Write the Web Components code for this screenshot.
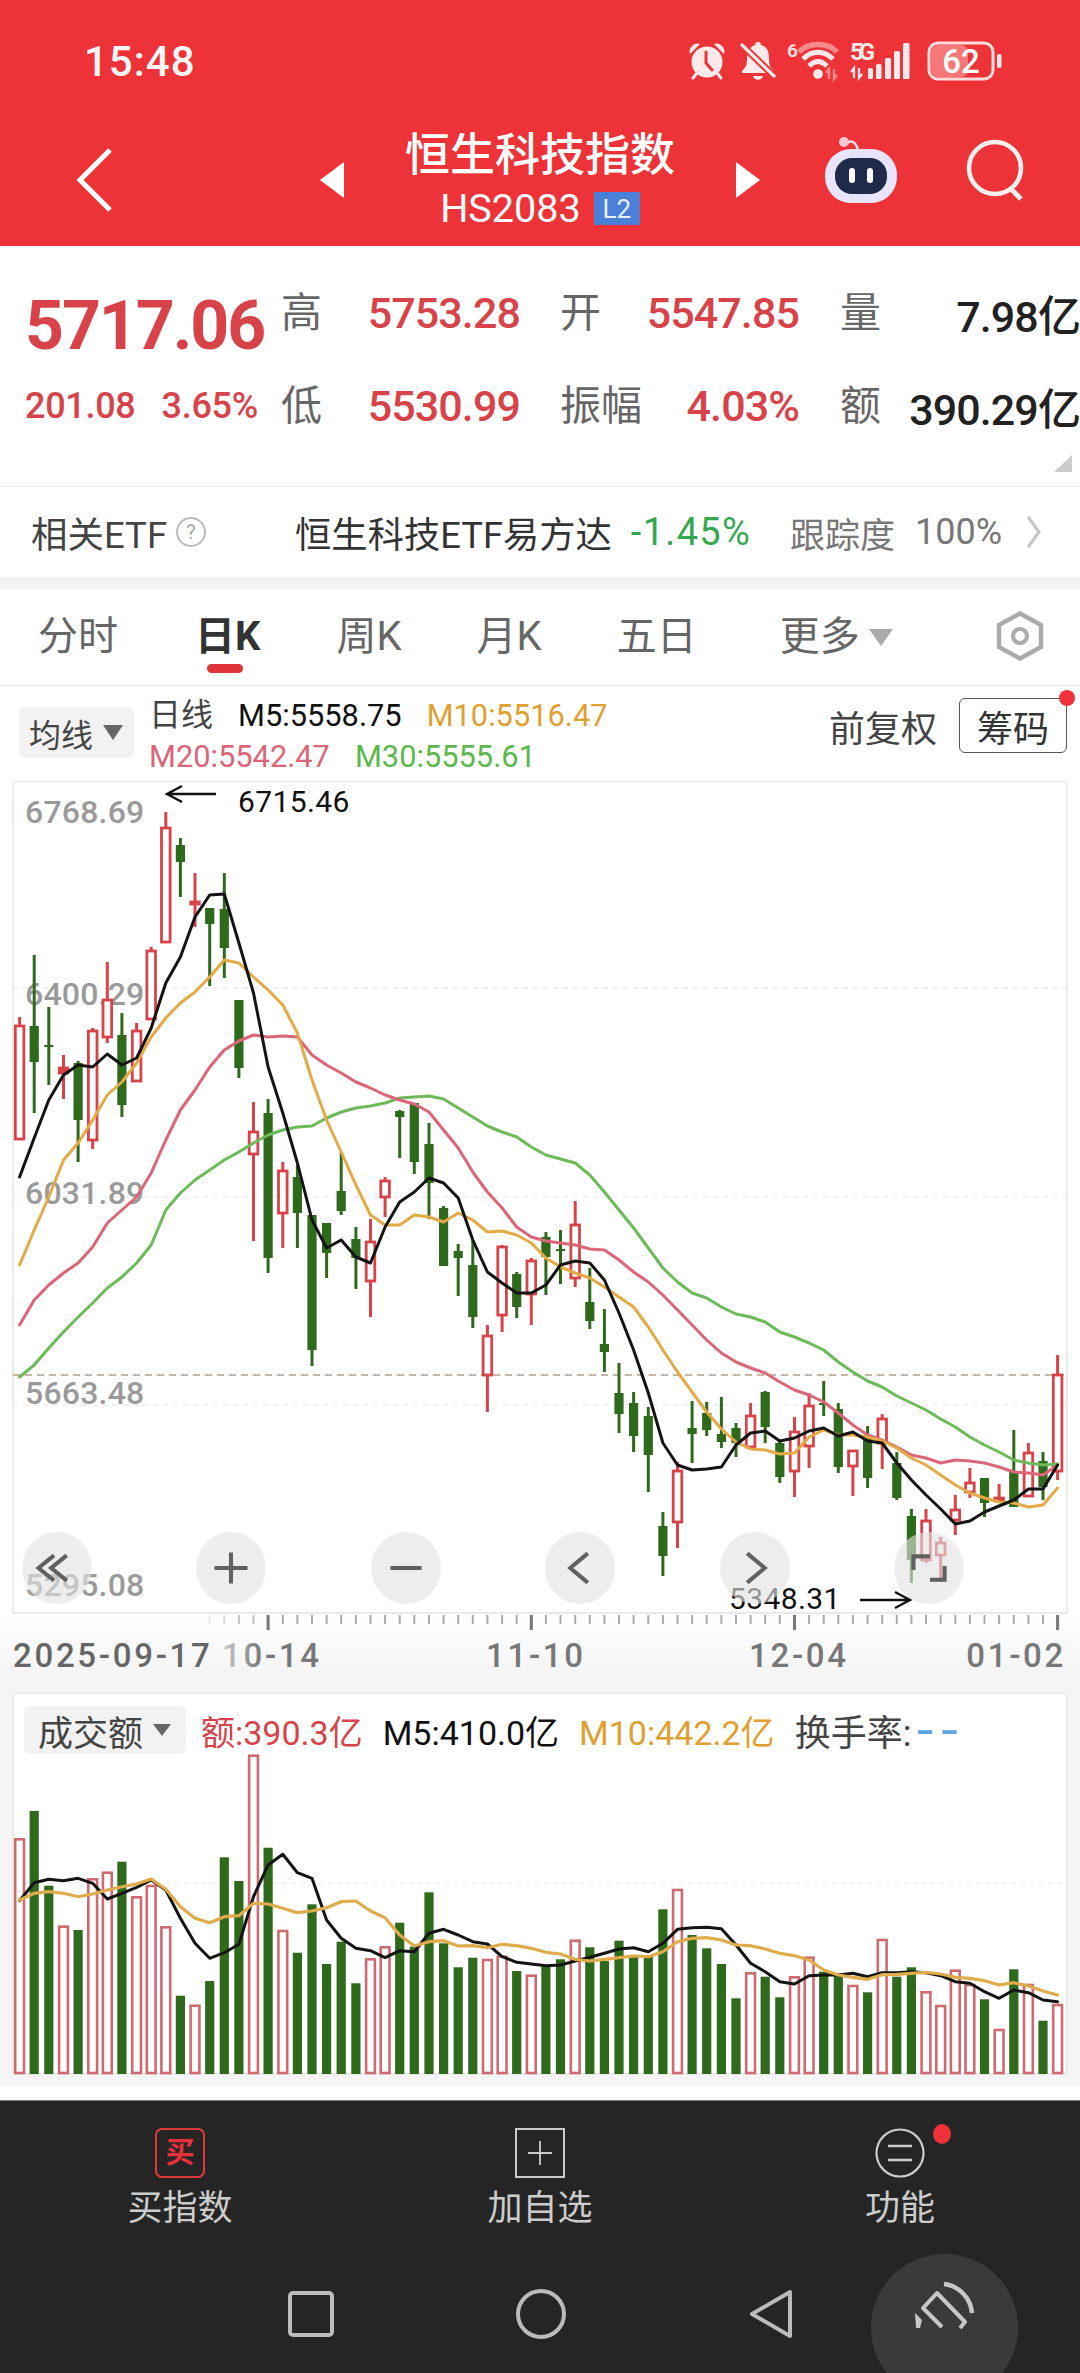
<!DOCTYPE html>
<html lang="zh-CN"><head><meta charset="utf-8"><title>恒生科技指数</title>
<style>
html,body{margin:0;padding:0;background:#fff}
body{width:1080px;height:2373px;overflow:hidden;font-family:Roboto,"Noto Sans CJK SC",sans-serif;color:#222}
</style></head><body>
<stock-header></stock-header>
<quote-panel></quote-panel>
<etf-row></etf-row>
<period-tabs></period-tabs>
<ma-legend></ma-legend>
<kline-chart></kline-chart>
<amount-chart></amount-chart>
<action-bar></action-bar>
<script>
const FONT='Roboto,"Noto Sans CJK SC",sans-serif';
const RED='#d8434a',GREEN='#2f6a1c',BLK='#141414',ORG='#e3aa45',PNK='#dc6678',LGR='#6dbb58';
const X=i=>19.6+14.62*i;
const poly=(a,c,w,f=y=>y)=>`<polyline fill="none" stroke="${c}" stroke-width="${w}" stroke-linejoin="round" stroke-linecap="round" points="${a.map((y,i)=>X(i).toFixed(1)+','+f(y).toFixed(1)).join(' ')}"/>`;
function def(name,css,html){
  customElements.define(name,class extends HTMLElement{
    constructor(){super();const s=this.attachShadow({mode:'open'});s.innerHTML=`<style>${css}</style>${typeof html==='function'?html(this):html}`;}
  });
}

/* ---------- header ---------- */
def('stock-header',`
:host{display:block;height:246px;background:#ee3338;color:#fff;font-family:${FONT}}
.status{display:flex;align-items:center;height:122px;box-sizing:border-box;padding:0 0 0 84px}
.time{font-size:42px;font-weight:500;letter-spacing:1px;width:603px;opacity:.96}
.icons{display:flex;align-items:center;gap:0}
.nav{display:flex;align-items:center;height:124px;position:relative;margin-top:-4px}
.back{margin-left:76px;width:38px;height:66px}
.ctr{position:absolute;left:320px;width:440px;top:0;display:flex;align-items:center;justify-content:space-between;height:100%}
.tt{display:flex;flex-direction:column;align-items:center;gap:3px;margin-top:-6px}
.name{font-size:45px;line-height:60px;font-weight:500;white-space:nowrap}
.code{display:flex;align-items:center;gap:13px;font-size:39.600px;line-height:40px;white-space:nowrap}
.l2{background:#4a80d8;width:46px;height:33px;display:flex;align-items:center;justify-content:center;font-size:26px;color:#e8f0ff}
.right{position:absolute;left:824px;top:18px;display:flex;gap:68px;align-items:center}
`,`
<div class="status"><span class="time">15:48</span><div class="icons">
<svg width="40" height="40" viewBox="0 0 40 40" style="margin-right:12px"><g fill="#ffe9e9"><path d="M3 13 A8 8 0 0 1 13 3 Z"/><path d="M37 13 A8 8 0 0 0 27 3 Z"/><circle cx="20" cy="21" r="15.5"/></g><path d="M6 37l4-5M34 37l-4-5" stroke="#ffe9e9" stroke-width="3" stroke-linecap="round"/><path d="M19 11v11l6 7" fill="none" stroke="#ee3338" stroke-width="3" stroke-linecap="round"/></svg>
<svg width="38" height="40" viewBox="0 0 38 40" style="margin-right:10px"><path d="M19 1c2 0 3 1 3 3 7 2 8 8 8 14 0 7 2 9 5 12v2H3v-2c3-3 5-5 5-12 0-6 2-12 8-14 0-2 1-3 3-3z" fill="#ffe9e9"/><path d="M14 35h10c-1 5-9 5-10 0z" fill="#ffe9e9"/><path d="M2 3l34 33" stroke="#ee3338" stroke-width="7"/><path d="M2 3l34 33" stroke="#ffe9e9" stroke-width="3.2"/></svg>
<svg width="54" height="64" viewBox="0 -12 54 64" style="margin-right:9px"><text x="0" y="16" font-size="19" font-weight="700" fill="#ffdede" font-family="Roboto">6</text><path d="M12 11C21 1 41 1 50 11" fill="none" stroke="#f98a8a" stroke-width="5.500"/><path d="M16 18C25 9 37 9 46 18M22 25C28 19 34 19 40 25" fill="none" stroke="#ffe9e9" stroke-width="4.800"/><circle cx="31" cy="33" r="4.800" fill="#ffe9e9"/><path d="M42 38V28l-3 4M47 28v10l3-4" fill="none" stroke="#f98a8a" stroke-width="2.400"/></svg>
<svg width="62" height="64" viewBox="0 -12 62 64" style="margin-right:15px"><text x="0" y="19" font-size="24" font-weight="700" fill="#ffe9e9" font-family="Roboto" textLength="25">5G</text><path d="M4 37V27l-3 4M9 27v10l3-4" fill="none" stroke="#ffe9e9" stroke-width="2.200"/><g fill="#ffe9e9"><rect x="18" y="27" width="5" height="11" rx="1.500"/><rect x="26" y="23" width="5.500" height="15" rx="1.500"/><rect x="35" y="17" width="6" height="21" rx="1.500"/><rect x="44" y="10" width="6" height="28" rx="1.500"/><rect x="53" y="2" width="6.500" height="36" rx="1.500"/></g></svg>
<svg width="76" height="40" viewBox="0 0 76 40"><rect x="2" y="2" width="64" height="36" rx="9" fill="none" stroke="#ffdcdc" stroke-width="3"/><rect x="4" y="4" width="37" height="32" rx="7" fill="#f77878"/><text x="34" y="32" text-anchor="middle" font-size="33" font-weight="500" fill="#fff" font-family="Roboto">62</text><rect x="70" y="13" width="4.500" height="14" rx="2" fill="#ffe9e9"/></svg>
</div></div>
<div class="nav">
<svg class="back" viewBox="0 0 38 66"><path d="M34 3L4 33l30 30" fill="none" stroke="#fff" stroke-width="5"/></svg>
<div class="ctr">
<svg width="24" height="36" viewBox="0 0 24 36"><path d="M24 0V36L0 18z" fill="#fff"/></svg>
<div class="tt"><div class="name">恒生科技指数</div><div class="code"><span>HS2083</span><span class="l2">L2</span></div></div>
<svg width="24" height="36" viewBox="0 0 24 36"><path d="M0 0V36L24 18z" fill="#fff"/></svg>
</div>
<div class="right">
<svg width="74" height="68" viewBox="0 0 74 68"><path d="M22 8c6-6 12 0 12 9" fill="none" stroke="#f6dfe8" stroke-width="2.500"/><circle cx="20" cy="6" r="5" fill="#f4c8d4"/><rect x="1" y="13" width="72" height="54" rx="26" fill="#e8e4fb"/><rect x="11" y="22" width="52" height="36" rx="17" fill="#1f2a4a"/><rect x="25" y="32" width="6" height="15" rx="3" fill="#fff"/><rect x="43" y="32" width="6" height="15" rx="3" fill="#fff"/></svg>
<svg width="60" height="62" viewBox="0 0 60 62"><circle cx="29" cy="29" r="26" fill="none" stroke="#ffeeee" stroke-width="4.600"/><path d="M44 49l11 11" stroke="#ffeeee" stroke-width="5"/></svg>
</div></div>`);

/* ---------- quote ---------- */
def('quote-panel',`
:host{display:block;position:relative;height:240px;border-bottom:1px solid #eee;background:#fff;font-family:${FONT};overflow:hidden}
.g{display:grid;grid-template-columns:256px 239px 279px 281px;grid-template-rows:93px 93px;padding:20px 0 0 25px;align-items:center}
.c{display:flex;justify-content:space-between;align-items:center;white-space:nowrap;box-sizing:border-box}
.c2{padding-left:40px}.c3{padding-left:41px}
.l{font-size:41px;color:#666;line-height:48px}
.v{font-size:43px;font-weight:500;color:${RED};letter-spacing:-.9px}
.k{color:#222}
.big{font-size:68px;font-weight:700;color:${RED};letter-spacing:-2.100px;line-height:70px;margin-top:26px}
.sm{display:flex;gap:26px;font-size:36px;font-weight:500;color:${RED};letter-spacing:-.3px}
.cnr{position:absolute;right:8px;bottom:14px;width:0;height:0;border-left:18px solid transparent;border-bottom:17px solid #ccc}
`,`
<div class="g">
<div class="big">5717.06</div>
<div class="c"><span class="l">高</span><span class="v">5753.28</span></div>
<div class="c c2"><span class="l">开</span><span class="v">5547.85</span></div>
<div class="c c3"><span class="l">量</span><span class="v k">7.98亿</span></div>
<div class="sm"><span>201.08</span><span>3.65%</span></div>
<div class="c"><span class="l">低</span><span class="v">5530.99</span></div>
<div class="c c2"><span class="l">振幅</span><span class="v">4.03%</span></div>
<div class="c c3"><span class="l">额</span><span class="v k">390.29亿</span></div>
</div><div class="cnr"></div>`);

/* ---------- etf row ---------- */
def('etf-row',`
:host{display:flex;align-items:center;height:90px;background:#fff;border-bottom:12px solid #f3f3f3;font-family:${FONT};padding-left:31px;white-space:nowrap}
.a{font-size:36.500px;color:#444}
.q{width:30px;height:30px;border:2px solid #bbb;border-radius:50%;box-sizing:border-box;margin-left:9px;display:flex;align-items:center;justify-content:center;font-size:20px;color:#aaa}
.n{font-size:36.300px;color:#333;margin-left:89px}
.p{font-size:38px;color:#35a850;margin-left:19px;letter-spacing:1.300px}
.t{font-size:35px;color:#777;margin-left:39px}
.h{font-size:36px;color:#777;margin-left:20px}
svg{margin-left:24px}
`,`<span class="a">相关ETF</span><span class="q">?</span><span class="n">恒生科技ETF易方达</span><span class="p">-1.45%</span><span class="t">跟踪度</span><span class="h">100%</span><svg width="16" height="34" viewBox="0 0 16 34"><path d="M2 2l11 15L2 32" fill="none" stroke="#c4c4c4" stroke-width="3"/></svg>`);

/* ---------- tabs ---------- */
def('period-tabs',`
:host{display:flex;align-items:center;height:97px;box-sizing:border-box;border-bottom:1.500px solid #eaeaea;position:relative;padding-left:38px;font-family:${FONT};background:#fff;white-space:nowrap}
span{font-size:40px;color:#666;line-height:48px;margin-top:0}
.on{font-weight:700;color:#333;position:relative}
.on::after{content:"";position:absolute;left:12px;top:51px;width:36px;height:9px;background:#e1343a;border-radius:5px}
.tri{width:0;height:0;border-left:12px solid transparent;border-right:12px solid transparent;border-top:17px solid #aaa;margin:0 0 0 9px}
svg{position:absolute;left:994px;top:22px}
`,`<span>分时</span><span class="on" style="margin-left:77px">日K</span><span style="margin-left:76px">周K</span><span style="margin-left:75px">月K</span><span style="margin-left:75px">五日</span><span style="margin-left:83px">更多</span><i class="tri"></i>
<svg width="52" height="50" viewBox="0 0 52 50"><path d="M26 2.500L47 14V36L26 47.500L5 36V14z" fill="none" stroke="#aaa" stroke-width="4.400" stroke-linejoin="round"/><circle cx="26" cy="25" r="7" fill="none" stroke="#aaa" stroke-width="4.200"/></svg>`);

/* ---------- legend ---------- */
def('ma-legend',`
:host{display:flex;height:95px;box-sizing:border-box;position:relative;padding:21px 0 0 19px;background:#fff;font-family:${FONT};white-space:nowrap}
.chip{display:flex;align-items:center;width:115px;height:51px;background:#f2f2f2;border-radius:6px;font-size:32px;color:#444;padding-left:10px;box-sizing:border-box}
.tri{width:0;height:0;border-left:10px solid transparent;border-right:10px solid transparent;border-top:15px solid #666;margin-left:10px}
.lines{margin:-12px 0 0 15px;font-size:30.800px;line-height:41px}
.lines span{margin-right:25px}
.right{position:absolute;left:829px;top:12px;display:flex;align-items:center;font-size:36px;color:#444;gap:22px}
.btn{width:108px;height:55px;border:1.500px solid #555;border-radius:6px;box-sizing:border-box;display:flex;align-items:center;justify-content:center;color:#333;position:relative}
.btn::after{content:"";position:absolute;right:-9px;top:-9px;width:16px;height:16px;border-radius:50%;background:#f0323c}
`,`<div class="chip"><span>均线</span><i class="tri"></i></div>
<div class="lines"><div><span style="color:#444;font-size:32px">日线</span><span style="color:#111">M5:5558.75</span><span style="color:#e0a030">M10:5516.47</span></div><div><span style="color:${PNK}">M20:5542.47</span><span style="color:#5cb84c">M30:5555.61</span></div></div>
<div class="right"><span>前复权</span><span class="btn">筹码</span></div>`);

/* ---------- kline ---------- */
const C=[
['r',1017,1026,1139,1139],['g',955,1026,1062,1113],['g',1007,1045,1047,1085],['r',1055,1068,1073,1099],['g',1061,1063,1120,1162],['r',1028,1031,1140,1149],['r',962,1000,1037,1043],['g',1013,1035,1105,1117],['r',1023,1031,1081,1082],['r',947,951,1019,1019],
['r',812,828,942,942],['g',838,845,862,897],['r',873,902,904,927],['g',908,908,924,986],['g',873,909,948,978],['g',1000,1000,1068,1078],['r',1102,1132,1154,1241],['g',1099,1113,1258,1273],['r',1162,1171,1213,1248],['g',1165,1177,1213,1248],
['g',1215,1215,1350,1366],['g',1223,1223,1253,1278],['g',1152,1191,1211,1215],['g',1227,1239,1258,1289],['r',1219,1242,1281,1317],['r',1177,1181,1197,1217],['g',1110,1111,1117,1158],['g',1103,1103,1162,1174],['g',1123,1144,1183,1219],['g',1206,1208,1266,1266],
['g',1244,1251,1258,1296],['g',1240,1265,1317,1328],['r',1325,1336,1375,1412],['r',1245,1247,1315,1332],['g',1272,1274,1307,1318],['r',1258,1261,1294,1325],['g',1232,1237,1257,1295],['g',1230,1249,1251,1284],['r',1201,1225,1278,1287],['g',1268,1302,1321,1329],
['g',1309,1344,1352,1372],['g',1363,1393,1414,1433],['g',1392,1403,1436,1452],['g',1407,1416,1455,1492],['g',1512,1526,1556,1576],['r',1462,1471,1522,1548],['g',1401,1428,1434,1463],['g',1402,1413,1430,1436],['g',1397,1434,1442,1448],['g',1423,1428,1443,1457],
['r',1403,1416,1447,1447],['g',1391,1392,1427,1443],['g',1440,1443,1477,1483],['r',1417,1432,1471,1497],['r',1393,1406,1446,1468],['g',1381,1403,1405,1416],['g',1403,1409,1467,1473],['r',1451,1451,1466,1496],['g',1426,1435,1478,1488],['r',1414,1419,1443,1469],
['g',1452,1463,1498,1500],['g',1509,1516,1560,1583],['r',1509,1521,1560,1563],['r',1537,1543,1555,1582],['r',1495,1510,1520,1535],['r',1468,1483,1492,1498],['g',1478,1478,1503,1517],['r',1484,1498,1501,1503],['g',1430,1472,1507,1507],['r',1443,1453,1496,1496],
['g',1452,1461,1487,1500],['r',1355,1375,1471,1480]];
const M5=[1177,1138,1100,1075,1065,1067,1054,1065,1058,1028,983,957,917,895,894,943,993,1067,1113,1163,1220,1248,1240,1257,1263,1227,1202,1192,1178,1183,1198,1240,1272,1283,1293,1293,1285,1265,1261,1263,1280,1313,1350,1393,1443,1465,1470,1469,1467,1445,1433,1431,1441,1438,1431,1428,1436,1432,1441,1443,1463,1480,1495,1509,1524,1521,1512,1506,1500,1489,1489,1465];
const M10=[1265,1230,1197,1160,1143,1120,1095,1082,1063,1037,1018,1003,992,977,960,963,977,990,1005,1033,1080,1120,1152,1185,1215,1225,1225,1215,1217,1222,1213,1220,1232,1231,1235,1243,1258,1267,1273,1278,1287,1297,1307,1327,1350,1372,1392,1412,1429,1442,1449,1450,1454,1453,1437,1430,1435,1435,1437,1441,1448,1458,1465,1475,1485,1493,1498,1502,1503,1507,1505,1488];
const M20=[1325,1300,1285,1273,1263,1247,1223,1210,1197,1173,1140,1110,1090,1067,1050,1041,1035,1037,1036,1037,1055,1065,1073,1082,1088,1095,1100,1104,1112,1130,1148,1172,1192,1208,1227,1237,1241,1243,1245,1249,1250,1260,1272,1282,1295,1310,1325,1340,1353,1362,1368,1373,1382,1390,1395,1402,1413,1425,1435,1440,1447,1455,1458,1463,1460,1461,1463,1467,1472,1473,1475,1465];
const M30=[1377,1365,1348,1332,1317,1303,1288,1277,1263,1245,1210,1193,1180,1170,1160,1152,1143,1135,1130,1127,1126,1118,1112,1108,1106,1103,1098,1097,1096,1099,1108,1117,1126,1132,1137,1147,1155,1159,1163,1175,1192,1210,1228,1248,1268,1282,1293,1298,1307,1314,1317,1322,1332,1337,1343,1350,1362,1372,1381,1387,1396,1403,1410,1419,1427,1437,1445,1452,1460,1463,1465,1464];
function candles(){let s='';C.forEach((c,i)=>{const x=X(i).toFixed(1),[t,h,o,b,l]=c,col=t==='r'?RED:GREEN;
 if(t==='g'){s+=`<path d="M${x} ${h}V${l}" stroke="${col}" stroke-width="3"/><rect x="${(X(i)-4.600).toFixed(1)}" y="${o}" width="9.200" height="${Math.max(b-o,2)}" fill="${col}"/>`;}
 else{s+=`<path d="M${x} ${h}V${o}M${x} ${b}V${l}" stroke="${col}" stroke-width="3"/><rect x="${(X(i)-4.300).toFixed(1)}" y="${o}" width="8.600" height="${Math.max(b-o,1.500)}" fill="${b-o<8?col:'#fff'}" stroke="${col}" stroke-width="2.800"/>`;}
});return s;}
function ticks(){let s='';for(let i=13;i<72;i++){const major=[17,35,53,71].includes(i);const op=i<14?.2:i<15?.4:i<17?.7:1;s+=`<path d="M${X(i).toFixed(1)} 1615V${major?1630:1624}" stroke="${major?'#777':'#aaa'}" stroke-width="${major?3:2}" opacity="${op}"/>`;}return s;}
const lab=(y,t)=>`<text x="25" y="${y}" font-size="32" font-weight="500" fill="#9a9a9a" letter-spacing=".2">${t}</text>`;
const dt=(x,t,a='start',c='#777')=>`<text x="${x}" y="1667" font-size="33" font-weight="500" fill="${c}" text-anchor="${a}" letter-spacing="2.700">${t}</text>`;
const grid=y=>`<path d="M13 ${y}H1067" stroke="#e4e4e4" stroke-width="1.200" stroke-dasharray="5 5"/>`;
def('kline-chart',`
:host{display:block;position:relative;height:912px;font-family:${FONT};background:linear-gradient(#fff 0,#fff 832px,#f5f5f5 890px,#f5f5f5 912px)}
svg{display:block}
.ctl{position:absolute;left:22px;top:751px;display:flex;gap:104.400px}
`,()=>`<svg width="1080" height="912" viewBox="0 781 1080 912" font-family='${FONT}'>
<defs><linearGradient id="fd" gradientUnits="userSpaceOnUse" x1="222" x2="262" y1="0" y2="0"><stop offset="0" stop-color="#ccc"/><stop offset="1" stop-color="#777"/></linearGradient></defs>
<rect x="13" y="781" width="1054" height="832" fill="#fff" stroke="#eaeaea" stroke-width="2"/>
${grid(988)}${grid(1197)}${grid(1405)}
${lab(823,'6768.69')}${lab(1005,'6400.29')}${lab(1204,'6031.89')}${lab(1404,'5663.48')}${lab(1596,'5295.08')}
<path d="M13 1375H1067" stroke="#b59f85" stroke-width="1.600" stroke-dasharray="7 5"/>
${candles()}
${poly(M30,LGR,3)}${poly(M20,PNK,3)}${poly(M10,ORG,3)}${poly(M5,BLK,3)}
<path d="M216 794H167M182 786l-15 8 15 8" fill="none" stroke="#111" stroke-width="2.400"/>
<text x="238" y="812" font-size="30" font-weight="400" fill="#111" letter-spacing=".4">6715.46</text>
<text x="729" y="1609" font-size="30" font-weight="400" fill="#111" letter-spacing=".4">5348.31</text>
<path d="M860 1600H910M895 1592l15 8-15 8" fill="none" stroke="#111" stroke-width="2.400"/>
${ticks()}
${dt(13,'2025-09-17','start','#666')}${dt(222,'10-14','start','url(#fd)')}${dt(486,'11-10')}${dt(749,'12-04')}${dt(1066,'01-02','end')}
</svg>
<div class="ctl">
<ctl-btn kind="first"></ctl-btn><ctl-btn kind="plus"></ctl-btn><ctl-btn kind="minus"></ctl-btn><ctl-btn kind="prev"></ctl-btn><ctl-btn kind="next"></ctl-btn><ctl-btn kind="full"></ctl-btn>
</div>`);
const CTL={first:'<path d="M33 23L17 36l16 13M46 23L30 36l16 13"/>',plus:'<path d="M36 20V52M19 36H53"/>',minus:'<path d="M20 36H52"/>',prev:'<path d="M44 21L26 36l18 15"/>',next:'<path d="M28 21L46 36 28 51"/>',full:'<path d="M20 38V24H37M52 34V48H37"/>'};
customElements.define('ctl-btn',class extends HTMLElement{connectedCallback(){if(this.shadowRoot)return;this.attachShadow({mode:'open'}).innerHTML=`<style>:host{display:block;width:70px;height:72px;border-radius:50%;background:rgba(226,226,226,.62)}svg{display:block}</style><svg width="70" height="72" viewBox="0 0 72 72" fill="none" stroke="#606060" stroke-width="4.200">${CTL[this.getAttribute('kind')]||''}</svg>`;}});

/* ---------- amount ---------- */
const V=[478,393,617,740,750,598,578,545,652,618,742,947,977,903,532,603,227,503,753,818,673,852,785,910,838,802,728,800,637,790,862,833,840,830,873,887,860,838,782,802,843,782,830,830,688,630,765,805,852,955,880,890,952,892,833,875,885,918,937,780,890,862,937,978,872,915,958,1050,868,915,1022,975];
const VT=C.map(c=>c[0]);
const VM5=[662,608,598,602,595,610,657,640,622,600,630,715,790,835,818,793,650,555,523,578,595,720,775,805,812,833,812,815,760,748,765,785,792,830,847,852,857,855,843,832,820,807,803,815,790,748,743,742,746,795,850,875,905,912,887,885,885,880,890,878,878,875,878,887,905,910,935,955,930,938,960,965];
const VM10=[660,640,635,640,650,642,630,620,612,597,628,680,715,728,710,707,670,672,685,698,693,683,665,663,693,713,765,798,785,782,798,797,803,793,797,805,817,822,838,843,838,833,828,830,815,785,775,773,780,795,797,807,820,827,840,870,885,892,898,884,883,880,877,882,892,895,902,915,908,918,933,945];
const yV=z=>1680+z/3;
function bars(){let s='';V.forEach((z,i)=>{const y=yV(z),t=VT[i];
 if(t==='g')s+=`<rect x="${(X(i)-4.600).toFixed(1)}" y="${y.toFixed(1)}" width="9.200" height="${(2074-y).toFixed(1)}" fill="${GREEN}"/>`;
 else s+=`<rect x="${(X(i)-4.400).toFixed(1)}" y="${y.toFixed(1)}" width="8.800" height="${(2073-y).toFixed(1)}" fill="#fff" stroke="#cf6a70" stroke-width="2.600"/>`;});return s;}
def('amount-chart',`
:host{display:block;position:relative;height:407px;font-family:${FONT};background:#fff}
svg{display:block}
.leg{position:absolute;left:24px;top:11px;display:flex;align-items:center;white-space:nowrap;font-size:34px}
.chip{display:flex;align-items:center;width:162px;height:48px;background:#f2f2f2;border-radius:6px;box-sizing:border-box;padding-left:14px;color:#444;font-size:35px;margin-right:15px}
.tri{width:0;height:0;border-left:9px solid transparent;border-right:9px solid transparent;border-top:12px solid #666;margin-left:10px}
.leg span{margin-right:20px}
.dd{display:inline-block;transform:scaleX(1.500);transform-origin:left center;color:#5aa5dd;font-weight:700;letter-spacing:3px}
`,()=>`<svg width="1080" height="407" viewBox="0 1693 1080 407">
<rect x="0" y="1693" width="1080" height="394" fill="#f5f5f5"/>
<rect x="13" y="1693" width="1054" height="381" fill="#fff" stroke="#eaeaea" stroke-width="2"/>
<path d="M13 1883H1067" stroke="#e4e4e4" stroke-width="1.200" stroke-dasharray="4 5"/>
${bars()}
${poly(VM5,BLK,3,yV)}${poly(VM10,'#e0ab4a',3.200,yV)}
</svg>
<div class="leg"><div class="chip"><b style="font-weight:400">成交额</b><i class="tri"></i></div><span style="color:${RED}">额:390.3亿</span><span style="color:#111">M5:410.0亿</span><span style="color:#e0a030">M10:442.2亿</span><span style="color:#444;margin-right:4px;font-size:36px">换手率:</span><span class="dd">--</span></div>`);

/* ---------- bottom bar ---------- */
def('action-bar',`
:host{display:block;position:relative;height:273px;background:#252525;border-top:1.500px solid #777;box-sizing:border-box;font-family:${FONT};color:#ccc;overflow:hidden}
.acts{display:grid;grid-template-columns:repeat(3,1fr);height:143px}
.a{display:flex;flex-direction:column;align-items:center;padding-top:27px;font-size:35px;line-height:50px;position:relative;gap:6px}
.ic{width:50px;height:50px;box-sizing:border-box;display:flex;align-items:center;justify-content:center}
.buy{border:2.500px solid #e0393e;border-radius:7px;color:#e8303a;font-size:29px;font-weight:700;line-height:1}
.dot{position:absolute;left:calc(50% + 33px);top:23px;width:18px;height:20px;border-radius:50%;background:#ef3238}
.sys{display:flex;align-items:center;height:60px;padding:40px 0 0 288px}
.sys svg{display:block}
.fab{position:absolute;left:871px;top:153px;width:147px;height:147px;border-radius:50%;background:#3a3a3a}
.fab svg{position:absolute;left:0;top:0}
`,`<div class="acts">
<div class="a"><span class="ic buy">买</span><span>买指数</span></div>
<div class="a"><svg class="ic" viewBox="0 0 50 50"><rect x="1" y="1" width="48" height="48" fill="none" stroke="#ccc" stroke-width="2"/><path d="M25 13V37M13 25H37" stroke="#ccc" stroke-width="1.800"/></svg><span>加自选</span></div>
<div class="a"><svg class="ic" viewBox="0 0 50 50"><circle cx="25" cy="25" r="23.500" fill="none" stroke="#ccc" stroke-width="2.200"/><path d="M13 18H37M13 32H37" stroke="#ccc" stroke-width="2.500"/></svg><span>功能</span><i class="dot"></i></div>
</div>
<div class="sys">
<svg width="46" height="46" viewBox="0 0 46 46"><rect x="2" y="2" width="42" height="42" rx="3" fill="none" stroke="#bbb" stroke-width="4"/></svg>
<svg style="margin-left:181px" width="52" height="50" viewBox="0 0 52 50"><circle cx="26" cy="25" r="23" fill="none" stroke="#bbb" stroke-width="4"/></svg>
<svg style="margin-left:181px" width="46" height="52" viewBox="0 0 46 52"><path d="M42 4V48L4 26z" fill="none" stroke="#bbb" stroke-width="4" stroke-linejoin="round"/></svg>
</div>
<div class="fab"><svg width="147" height="147" viewBox="871 2254 147 147"><path d="M942 2327L923 2308 937 2293 965 2322 960 2328" fill="none" stroke="#c8c8c8" stroke-width="4" stroke-linejoin="round"/><path d="M944 2284A32 32 0 0 1 972 2313" fill="none" stroke="#c8c8c8" stroke-width="4.500"/><path d="M915 2313l7 7-2 8h-4z" fill="#c8c8c8"/></svg></div>`);
</script>
</body></html>
